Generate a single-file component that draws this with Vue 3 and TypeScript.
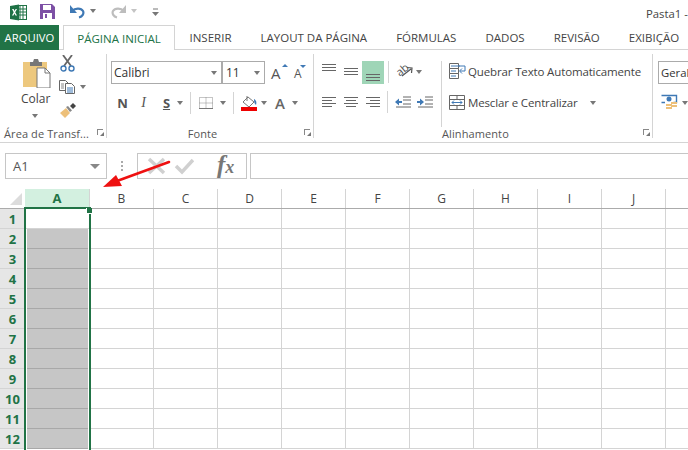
<script setup lang="ts">
const cols: string[] = ['A', 'B', 'C', 'D', 'E', 'F', 'G', 'H', 'I', 'J', '']
const rows: number[] = [1, 2, 3, 4, 5, 6, 7, 8, 9, 10, 11, 12]
const tabs: string[] = ['INSERIR', 'LAYOUT DA PÁGINA', 'FÓRMULAS', 'DADOS', 'REVISÃO', 'EXIBIÇÃO']
</script>

<template>
  <div class="app">
    <div class="qat">
      <svg class="ic x" width="17" height="17" viewBox="0 0 17 17">
        <rect x="6" y="1.5" width="10.5" height="14" fill="#fff" stroke="#217346" />
        <path d="M10 2v13M13 2v13M7 5h9M7 8h9M7 11h9" stroke="#217346" stroke-width="1" />
        <path d="M0 2l9-1.500v16L0 15z" fill="#1e7145" />
        <path d="M2 5l1.700 3.300L2 11.500h1.500l1-2.100 1 2.100H7L5.200 8.300 7 5H5.600l-1 2-1-2z" fill="#fff" />
      </svg>
      <svg class="ic sv" width="15" height="15" viewBox="0 0 15 15">
        <path d="M0 0h12l3 3v12H0z" fill="#7d50a5" />
        <rect x="3" y="1" width="8" height="5" fill="#fff" />
        <rect x="3" y="9" width="9" height="6" fill="#fff" />
        <rect x="5" y="10" width="2" height="4" fill="#7d50a5" />
      </svg>
      <svg class="ic un" width="16" height="15" viewBox="0 0 16 15">
        <path d="M3 7c3-3 9-3.500 11 0 1.200 2.500-.5 5.500-4 6.500" fill="none" stroke="#3f79b5" stroke-width="2.200" />
        <path d="M1 1v8h7z" fill="#3f79b5" />
      </svg>
      <span class="caret c1"></span>
      <svg class="ic re" width="16" height="15" viewBox="0 0 16 15">
        <path d="M13 7c-3-3-9-3.500-11 0-1.200 2.500.5 5.500 4 6.500" fill="none" stroke="#bdbdbd" stroke-width="2.200" />
        <path d="M15 1v8H8z" fill="#bdbdbd" />
      </svg>
      <span class="caret lite c2"></span>
      <svg class="ic cu" width="7" height="8" viewBox="0 0 7 8">
        <path d="M1 1h5" stroke="#777" /><path d="M0 4h7L3.500 8z" fill="#777" />
      </svg>
      <span class="title">Pasta1 -</span>
    </div>

    <div class="tabs">
      <div class="file">ARQUIVO</div>
      <div class="tab active">PÁGINA INICIAL</div>
      <div v-for="t in tabs" :key="t" class="tab">{{ t }}</div>
    </div>

    <div class="ribbon">
      <section class="group g1">
        <div class="body clip">
          <div class="paste">
            <svg width="28" height="30" viewBox="0 0 28 30">
              <rect x="0" y="4" width="24" height="25" fill="#edc87e" />
              <path d="M7 4h3l1-3h4l1 3h3v4H7z" fill="#777" />
              <path d="M14 10h8l5 5v15H14z" fill="#fff" stroke="#777" />
              <path d="M22 10v5h5" fill="none" stroke="#777" />
            </svg>
            <span class="colar">Colar</span>
            <span class="caret"></span>
          </div>
          <div class="clipcol">
            <svg width="15" height="17" viewBox="0 0 15 17">
              <path d="M3 0l8 11M12 0L4 11" stroke="#666" stroke-width="1.800" />
              <circle cx="3.500" cy="13.500" r="2.500" fill="none" stroke="#3f79b5" stroke-width="1.400" />
              <circle cx="11.500" cy="13.500" r="2.500" fill="none" stroke="#3f79b5" stroke-width="1.400" />
            </svg>
            <div class="row copy">
              <svg width="16" height="14" viewBox="0 0 16 14">
                <path d="M.5.500h6l3 3v7h-9z" fill="#fff" stroke="#666" />
                <path d="M6.500 3.500h6l3 3v7h-9z" fill="#fff" stroke="#666" />
                <path d="M8 8h6M8 10h6M8 12h6" stroke="#3f79b5" />
                <path d="M2 4h3M2 6h3M2 8h3" stroke="#888" />
              </svg>
              <span class="caret"></span>
            </div>
            <svg width="17" height="15" viewBox="0 0 17 15">
              <path d="M1 10l6-5 4 5-5 5z" fill="#edc07a" />
              <path d="M7 4l2-1 4 4.500-2 1.500z" fill="#888" />
              <path d="M11 3l3-3 3 3-3 3z" fill="#444" />
            </svg>
          </div>
        </div>
        <div class="label">
          <span class="ltext">Área de Transf...</span>
          <span class="launch"></span>
        </div>
      </section>

      <section class="group g2">
        <div class="body font">
          <div class="row r1">
            <div class="select fname"><span>Calibri</span><i class="caret"></i></div>
            <div class="select fsize"><span>11</span><i class="caret"></i></div>
            <div class="bigA grow">A<em class="up"></em></div>
            <div class="bigA shrink">A<em class="down"></em></div>
          </div>
          <div class="row r2">
            <b class="fmt n">N</b>
            <i class="fmt it">I</i>
            <u class="fmt st">S</u>
            <span class="caret c-s"></span>
            <span class="vsep vs1"></span>
            <svg class="bd" width="14" height="12" viewBox="0 0 14 12">
              <path d="M.5.500h13v11H.5zM7 .5v11M.5 6h13" fill="none" stroke="#8a8a8a" stroke-dasharray="1 1" />
              <path d="M0 11.500h14" stroke="#777" />
            </svg>
            <span class="caret c-b"></span>
            <span class="vsep vs2"></span>
            <div class="fill">
              <svg width="16" height="12" viewBox="0 0 16 12">
                <path d="M7 1l6 5-5 5-6-5z" fill="#fff" stroke="#777" />
                <path d="M6 0v5" stroke="#777" />
                <path d="M13 3c2 1 3 3 2 6-1-1-2-2-2-6z" fill="#3f79b5" />
              </svg>
              <span class="redbar"></span>
            </div>
            <span class="caret c-f"></span>
            <span class="colorA">A</span>
            <span class="caret c-a"></span>
          </div>
        </div>
        <div class="label center">
          <span class="ltext">Fonte</span>
          <span class="launch"></span>
        </div>
      </section>

      <section class="group g3">
        <div class="body align">
          <div class="aligncols">
            <div class="row ar1">
              <span class="lines three top"><i></i><i></i></span>
              <span class="lines three mid"><i></i><i></i></span>
              <span class="hl"><span class="lines three"><i></i><i></i></span></span>
              <span class="vsep a1"></span>
              <svg class="orient" width="17" height="17" viewBox="0 0 17 17">
                <text x="1" y="12" transform="rotate(-40 5 9)" class="abtxt">ab</text>
                <path d="M6 13l9-7M11 4.500l5 .5-.5 5" fill="none" stroke="#555" stroke-width="1.200" />
              </svg>
              <span class="caret c-o"></span>
            </div>
            <div class="row ar2">
              <span class="lines left"><i></i><i class="sh"></i><i></i><i class="sh"></i></span>
              <span class="lines ctr"><i></i><i class="sh"></i><i></i><i class="sh"></i></span>
              <span class="lines rgt"><i></i><i class="sh"></i><i></i><i class="sh"></i></span>
              <span class="vsep a2"></span>
              <svg class="ind" width="16" height="12" viewBox="0 0 16 12">
                <path d="M8 1h8M8 4h8M8 8h8M1 11h15" stroke="#666" />
                <path d="M0 6l4-3.500V5h3v2H4v2.500z" fill="#3f79b5" />
              </svg>
              <svg class="ind i2" width="16" height="12" viewBox="0 0 16 12">
                <path d="M8 1h8M8 4h8M8 8h8M1 11h15" stroke="#666" />
                <path d="M7 6L3 2.500V5H0v2h3v2.500z" fill="#3f79b5" />
              </svg>
            </div>
          </div>
          <span class="vsep a3"></span>
          <div class="wrapcol">
            <div class="row wr">
              <svg width="17" height="16" viewBox="0 0 17 16">
                <path d="M.5.500h9v5h-9zM.5 5.500h9v5h-9zM.5 10.500h9v5h-9z" fill="#fff" stroke="#666" />
                <path d="M2 3h9M2 8h5M2 13h5" stroke="#3f79b5" />
                <path d="M10 3h6v5h-5M13 5.500L10.500 8 13 10.500" fill="none" stroke="#3f79b5" />
              </svg>
              <span class="cmd">Quebrar Texto Automaticamente</span>
            </div>
            <div class="row mg">
              <svg width="16" height="15" viewBox="0 0 16 15">
                <path d="M.5.500h15v14H.5zM.5 4.500h15M.5 10.500h15M8 .5v4M8 10.500v4" fill="#fff" stroke="#666" />
                <path d="M3 7.500h10M5 5.500l-2 2 2 2M11 5.500l2 2-2 2" fill="none" stroke="#3f79b5" />
              </svg>
              <span class="cmd">Mesclar e Centralizar</span>
              <span class="caret c-m"></span>
            </div>
          </div>
        </div>
        <div class="label alabel">
          <span class="ltext">Alinhamento</span>
          <span class="launch"></span>
        </div>
      </section>

      <section class="group g4">
        <div class="body num">
          <div class="select geral"><span>Geral</span></div>
          <div class="row cur">
            <svg width="17" height="17" viewBox="0 0 17 17">
              <path d="M.5 1.500h15v7h-3M4 8.500H.5z" fill="none" stroke="#3f79b5" stroke-width="1.400" />
              <circle cx="8" cy="5" r="2.500" fill="#3f79b5" />
              <path d="M5 10h6v2H5zM5 13h6v2H5zM10 8h6v2h-6zM10 11h6v2h-6z" fill="#edc07a" />
            </svg>
            <span class="caret"></span>
          </div>
        </div>
      </section>
    </div>

    <div class="fbar">
      <div class="namebox"><span>A1</span><i class="caret big"></i></div>
      <div class="dots"><i></i><i></i><i></i></div>
      <div class="fbtns">
        <svg width="20" height="18" viewBox="0 0 20 18">
          <path d="M2 2l15 14M17 2L2 16" stroke="#d0d0d0" stroke-width="3.500" />
        </svg>
        <svg width="20" height="18" viewBox="0 0 20 18">
          <path d="M2 9l6 6L19 3" fill="none" stroke="#d0d0d0" stroke-width="3.500" />
        </svg>
        <span class="fx"><i>f</i><i class="xx">x</i></span>
      </div>
      <div class="finput"></div>
    </div>

    <div class="sheet">
      <div class="head">
        <div class="corner"><span class="tri"></span></div>
        <div v-for="c in cols" :key="c" class="ch" :class="{ sel: c === 'A' }">{{ c }}</div>
      </div>
      <div v-for="r in rows" :key="r" class="grow-row">
        <div class="rh">{{ r }}</div>
        <div v-for="c in cols" :key="c" class="cell" :class="{ cola: c === 'A', gray: c === 'A' && r > 1 }"></div>
      </div>
      <div class="selection"><span class="handle"></span></div>
    </div>

    <svg class="arrow" width="72" height="30" viewBox="0 0 72 30">
      <path d="M66 2L14 21" stroke="#ee1111" stroke-width="2.600" stroke-linecap="round" />
      <path d="M0 27L13 15l6 11z" fill="#ee1111" />
    </svg>
  </div>
</template>

<style>
html, body { margin: 0; overflow: hidden; background: #fff; }
</style>

<style scoped>
.app { position: relative; width: 688px; height: 450px; overflow: hidden; background: #fff; font-family: "Open Sans", "Noto Sans", sans-serif; color: #444; font-size: 12px; }
.row { display: flex; align-items: center; }
svg { display: block; flex: none; }
.caret { display: inline-block; width: 0; height: 0; border-left: 3.500px solid transparent; border-right: 3.500px solid transparent; border-top: 4px solid #777; flex: none; }
.caret.lite { border-top-color: #c4c4c4; }
.caret.big { border-left-width: 5px; border-right-width: 5px; border-top-width: 5px; border-top-color: #888; }
.abtxt { font-size: 11px; fill: #555; font-family: "Open Sans", sans-serif; }

.qat { height: 25px; display: flex; align-items: center; position: relative; }
.ic { position: relative; }
.x { margin-left: 10px; margin-top: -1px; }
.sv { margin-left: 13px; margin-top: -3px; }
.un { margin-left: 14px; margin-top: -3px; }
.c1 { margin-left: 5px; margin-top: -3px; }
.re { margin-left: 15px; margin-top: -3px; }
.c2 { margin-left: 4px; margin-top: -3px; }
.cu { margin-left: 15px; margin-top: -1px; }
.title { margin-left: auto; width: 42px; white-space: nowrap; margin-top: 1px; color: #444; font-size: 11.300px; }

.tabs { height: 25px; display: flex; align-items: stretch; box-sizing: border-box; border-bottom: 1px solid #d4d4d4; white-space: nowrap; font-size: 11.500px; }
.file { width: 59px; flex: none; margin-bottom: -1px; background: #217346; color: #fff; display: flex; align-items: center; justify-content: center; font-size: 11.300px; }
.tab { flex: none; padding: 0 14.500px; display: flex; align-items: center; color: #444; }
.tab.active { margin-left: 4px; width: 112px; padding: 0; box-sizing: border-box; justify-content: center; color: #217346; background: #fff; border: 1px solid #d4d4d4; border-bottom: none; margin-bottom: -1px; }

.ribbon { height: 93px; box-sizing: border-box; border-bottom: 1px solid #d4d4d4; display: flex; }
.group { position: relative; box-sizing: border-box; display: flex; flex-direction: column; height: 92px; flex: none; }
.group::after { content: ""; position: absolute; right: 0; top: 4px; height: 84px; width: 1px; background: #d4d4d4; }
.g1 { width: 107px; }
.g2 { width: 207px; }
.g3 { width: 339px; }
.g4 { width: 35px; }
.g4::after { display: none; }
.body { flex: 1; min-height: 0; position: relative; }
.label { height: 22px; padding: 5px 5px 0 4px; display: flex; align-items: center; font-size: 11px; color: #555; box-sizing: border-box; position: relative; letter-spacing: .1px; }
.label.center { justify-content: center; padding-left: 0; padding-right: 16px; }
.alabel { padding-left: 128px; }
.ltext { white-space: nowrap; }
.launch { position: absolute; right: 4px; top: 9px; width: 6px; height: 6px; border-left: 1px solid #888; border-top: 1px solid #888; box-sizing: border-box; }
.launch::after { content: ""; position: absolute; right: -1px; bottom: -1px; width: 4px; height: 4px; background: #777; clip-path: polygon(100% 0, 100% 100%, 0 100%); }

.clip { display: flex; }
.paste { width: 28px; margin-left: 23px; margin-top: 8px; display: flex; flex-direction: column; align-items: flex-start; }
.colar { margin-top: 3px; margin-left: -2px; line-height: 16px; font-size: 12px; }
.paste .caret { margin: 7px 0 0 9px; }
.clipcol { margin-left: 8px; margin-top: 5px; display: flex; flex-direction: column; align-items: flex-start; }
.clipcol > svg:first-child { margin-left: 1px; }
.copy { margin-top: 8px; gap: 5px; }
.clipcol > svg:last-child { margin-top: 9px; }

.r1 { padding: 11px 0 0 4px; align-items: flex-start; }
.select { height: 23px; box-sizing: border-box; border: 1px solid #ababab; display: flex; align-items: center; padding-left: 2px; font-size: 12px; color: #333; background: #fff; position: relative; }
.select .caret { position: absolute; right: 4px; top: 9px; }
.fname { width: 111px; }
.fsize { width: 43px; padding-left: 3px; }
.bigA { font-size: 15px; line-height: 20px; color: #555; font-weight: 400; position: relative; margin-top: 2px; }
.grow { margin-left: 6px; font-size: 15px; width: 23px; }
.shrink { font-size: 12px; width: 12px; margin-top: 3px; }
.up, .down { position: absolute; top: 1px; left: 11px; width: 0; height: 0; border-left: 3px solid transparent; border-right: 3px solid transparent; }
.up { border-bottom: 3px solid #3f79b5; }
.down { left: 6px; border-top: 3px solid #3f79b5; }

.r2 { margin-top: 7px; height: 24px; padding-left: 10px; }
.fmt { font-family: "Open Sans", sans-serif; font-size: 13px; color: #555; width: 11px; text-align: center; line-height: 16px; flex: none; }
.n { font-weight: 700; }
.it { margin-left: 10px; font-family: "Liberation Serif", serif; font-size: 14px; }
.st { margin-left: 12px; font-weight: 700; }
.c-s { margin-left: 5px; }
.vsep { width: 1px; background: #d4d4d4; flex: none; height: 22px; display: block; }
.vs1 { margin-left: 7px; }
.bd { margin-left: 8px; }
.c-b { margin-left: 7px; }
.vs2 { margin-left: 7px; }
.fill { margin-left: 7px; width: 16px; display: flex; flex-direction: column; }
.redbar { height: 4px; background: #ee0000; display: block; margin-top: -1px; }
.c-f { margin-left: 4px; }
.colorA { margin-left: 8px; font-size: 15px; font-weight: 600; color: #666; line-height: 18px; }
.c-a { margin-left: 7px; }

.align { display: flex; }
.aligncols { width: 127px; flex: none; }
.ar1 { padding: 11px 0 0 8px; height: 34px; box-sizing: border-box; align-items: flex-start; }
.lines { display: flex; flex-direction: column; gap: 2px; width: 14px; flex: none; }
.lines i { display: block; height: 1px; background: #666; width: 14px; }
.lines i.sh { width: 10px; }
.three::before { content: ""; display: block; height: 1px; background: #666; width: 14px; }
.top { margin-top: 3px; }
.mid { margin-left: 8px; margin-top: 7px; }
.hl { margin-left: 4px; width: 22px; height: 23px; background: #9fd5b7; flex: none; display: flex; justify-content: center; padding-top: 13px; box-sizing: border-box; }
.a1 { margin-left: 4px; height: 22px; }
.orient { margin-left: 7px; margin-top: 2px; }
.c-o { margin-left: 3px; margin-top: 9px; }
.ar2 { margin-top: 6px; padding-left: 8px; height: 24px; }
.ctr { margin-left: 8px; align-items: center; }
.rgt { margin-left: 8px; align-items: flex-end; }
.a2 { margin-left: 7px; }
.ind { margin-left: 7px; }
.i2 { margin-left: 6px; }
.a3 { height: 66px; margin-top: 11px; }
.wrapcol { margin-left: 7px; }
.wr { margin-top: 13px; gap: 2px; }
.mg { margin-top: 16px; gap: 3px; }
.cmd { white-space: nowrap; font-size: 11.500px; color: #444; letter-spacing: -.14px; }
.c-m { margin-left: 9px; }

.num { padding: 11px 0 0 5px; }
.geral { width: 40px; border-right: none; font-size: 11.300px; white-space: nowrap; }
.cur { margin-top: 10px; margin-left: 3px; gap: 4px; }

.fbar { height: 26px; margin-top: 10px; display: flex; align-items: stretch; }
.namebox { width: 102px; flex: none; margin-left: 5px; box-sizing: border-box; border: 1px solid #c6c6c6; display: flex; align-items: center; padding-left: 7px; color: #555; position: relative; font-size: 13px; }
.namebox .caret { position: absolute; right: 6px; top: 10px; }
.dots { width: 30px; flex: none; display: flex; flex-direction: column; align-items: center; justify-content: center; gap: 2px; }
.dots i { display: block; width: 2px; height: 2px; background: #aaa; }
.fbtns { width: 110px; flex: none; box-sizing: border-box; border: 1px solid #c6c6c6; display: flex; align-items: center; padding-left: 9px; gap: 7px; }
.fx { font-family: "Liberation Serif", serif; font-size: 25px; color: #777; font-weight: 700; margin-left: 16px; white-space: nowrap; line-height: 22px; }
.xx { font-size: 18px; }
.finput { flex: 1; margin-left: 3px; border: 1px solid #c6c6c6; border-right: none; }

.sheet { position: relative; margin-top: 10px; }
.head { display: flex; height: 20px; box-sizing: border-box; border-bottom: 1px solid #ababab; }
.corner { width: 25px; flex: none; position: relative; box-sizing: border-box; background: #fff; }
.tri { position: absolute; right: 3px; bottom: 3px; width: 12px; height: 12px; background: #dcdcdc; clip-path: polygon(100% 0, 100% 100%, 0 100%); }
.ch { width: 64px; flex: none; box-sizing: border-box; border-right: 1px solid #d4d4d4; text-align: center; line-height: 19px; font-size: 12px; color: #444; }
.ch.sel { width: 65px; background: #d3f0e0; color: #217346; font-weight: 700; font-size: 13px; }
.grow-row { display: flex; height: 20px; }
.rh { width: 25px; flex: none; box-sizing: border-box; background: #e6e6e6; border-bottom: 1px solid #d4d4d4; text-align: center; color: #217346; font-weight: 700; font-size: 13px; line-height: 20px; }
.cell { width: 64px; flex: none; box-sizing: border-box; border-right: 1px solid #d4d4d4; border-bottom: 1px solid #d4d4d4; }
.cell.cola { width: 65px; }
.cell.gray { background: #c6c6c6; border-bottom-color: #a8a8a8; }
.selection { position: absolute; left: 24px; top: 18px; width: 67px; height: 300px; box-sizing: border-box; border: 2px solid #217346; border-bottom: none; }
.selection::before { content: ""; position: absolute; left: 0; right: 0; top: 20px; bottom: 0; border-left: 1px solid #fff; border-right: 1px solid #fff; }
.handle { position: absolute; right: -3px; top: -1px; width: 5px; height: 5px; background: #217346; border-left: 1px solid #fff; border-bottom: 1px solid #fff; }

.arrow { position: absolute; left: 103px; top: 160px; }
</style>
